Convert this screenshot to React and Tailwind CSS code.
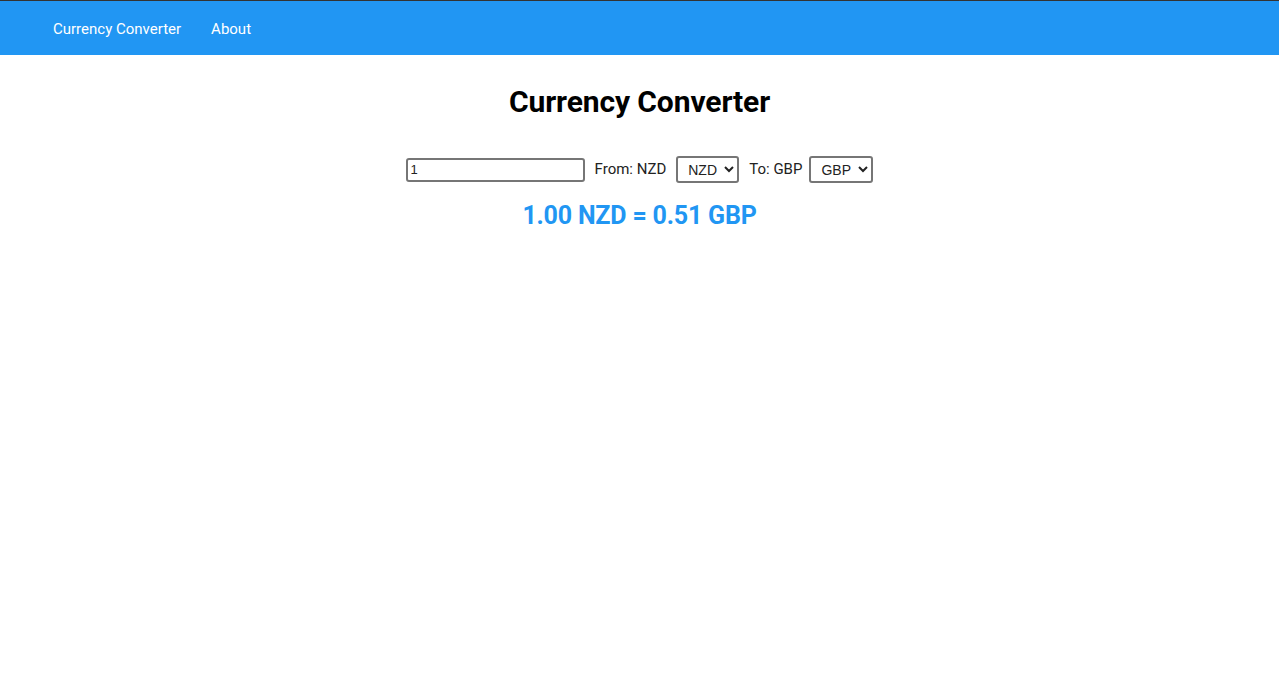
import React, { useState } from 'react';

const rates = { NZD: 1, GBP: 0.51, USD: 0.61, EUR: 0.56, AUD: 0.92 };

const App = () => {
	const [amount, setAmount] = useState('1');
	const [from, setFrom] = useState('NZD');
	const [to, setTo] = useState('GBP');

	const value = parseFloat(amount) || 0;
	const result = (value / rates[from]) * rates[to];

	return (
		<div className="min-h-screen bg-white font-['Roboto',sans-serif] text-black">
			<nav className="border-t border-[#333] bg-[#2196f3] h-[55px] flex items-center px-[53px] gap-[30px]">
				<a href="#" className="text-white text-[15px] pt-[2px]">Currency Converter</a>
				<a href="#" className="text-white text-[15px] pt-[2px]">About</a>
			</nav>
			<div className="flex flex-col items-center">
				<h1 className="mt-[28px] text-[30px] font-bold leading-[38px] tracking-[-0.1px]">Currency Converter</h1>
				<div className="mt-[35px] flex items-center text-[15px] text-[#222]">
					<input
						type="text"
						value={amount}
						onChange={(e) => setAmount(e.target.value)}
						className="w-[179px] h-[24px] border-2 border-[#767676] rounded-[3px] px-[3px] text-[13px] font-['Liberation_Sans',sans-serif]"
					/>
					<span className="ml-[10px]">From: {from}</span>
					<select
						value={from}
						onChange={(e) => setFrom(e.target.value)}
						className="ml-[10px] h-[27px] w-[63px] border-2 border-[#767676] rounded-[3px] pl-[6px] pr-[2px] text-[14px] font-['Liberation_Sans',sans-serif] bg-white"
					>
						{Object.keys(rates).map((c) => <option key={c}>{c}</option>)}
					</select>
					<span className="ml-[10px]">To: {to}</span>
					<select
						value={to}
						onChange={(e) => setTo(e.target.value)}
						className="ml-[7px] h-[27px] w-[64px] border-2 border-[#767676] rounded-[3px] pl-[6px] pr-[2px] text-[14px] font-['Liberation_Sans',sans-serif] bg-white"
					>
						{Object.keys(rates).map((c) => <option key={c}>{c}</option>)}
					</select>
				</div>
				<p className="mt-[14px] text-[25px] font-bold text-[#2196f3] tracking-[-0.2px]">
					{value.toFixed(2)} {from} = {result.toFixed(2)} {to}
				</p>
			</div>
		</div>
	);
};

export default App;
